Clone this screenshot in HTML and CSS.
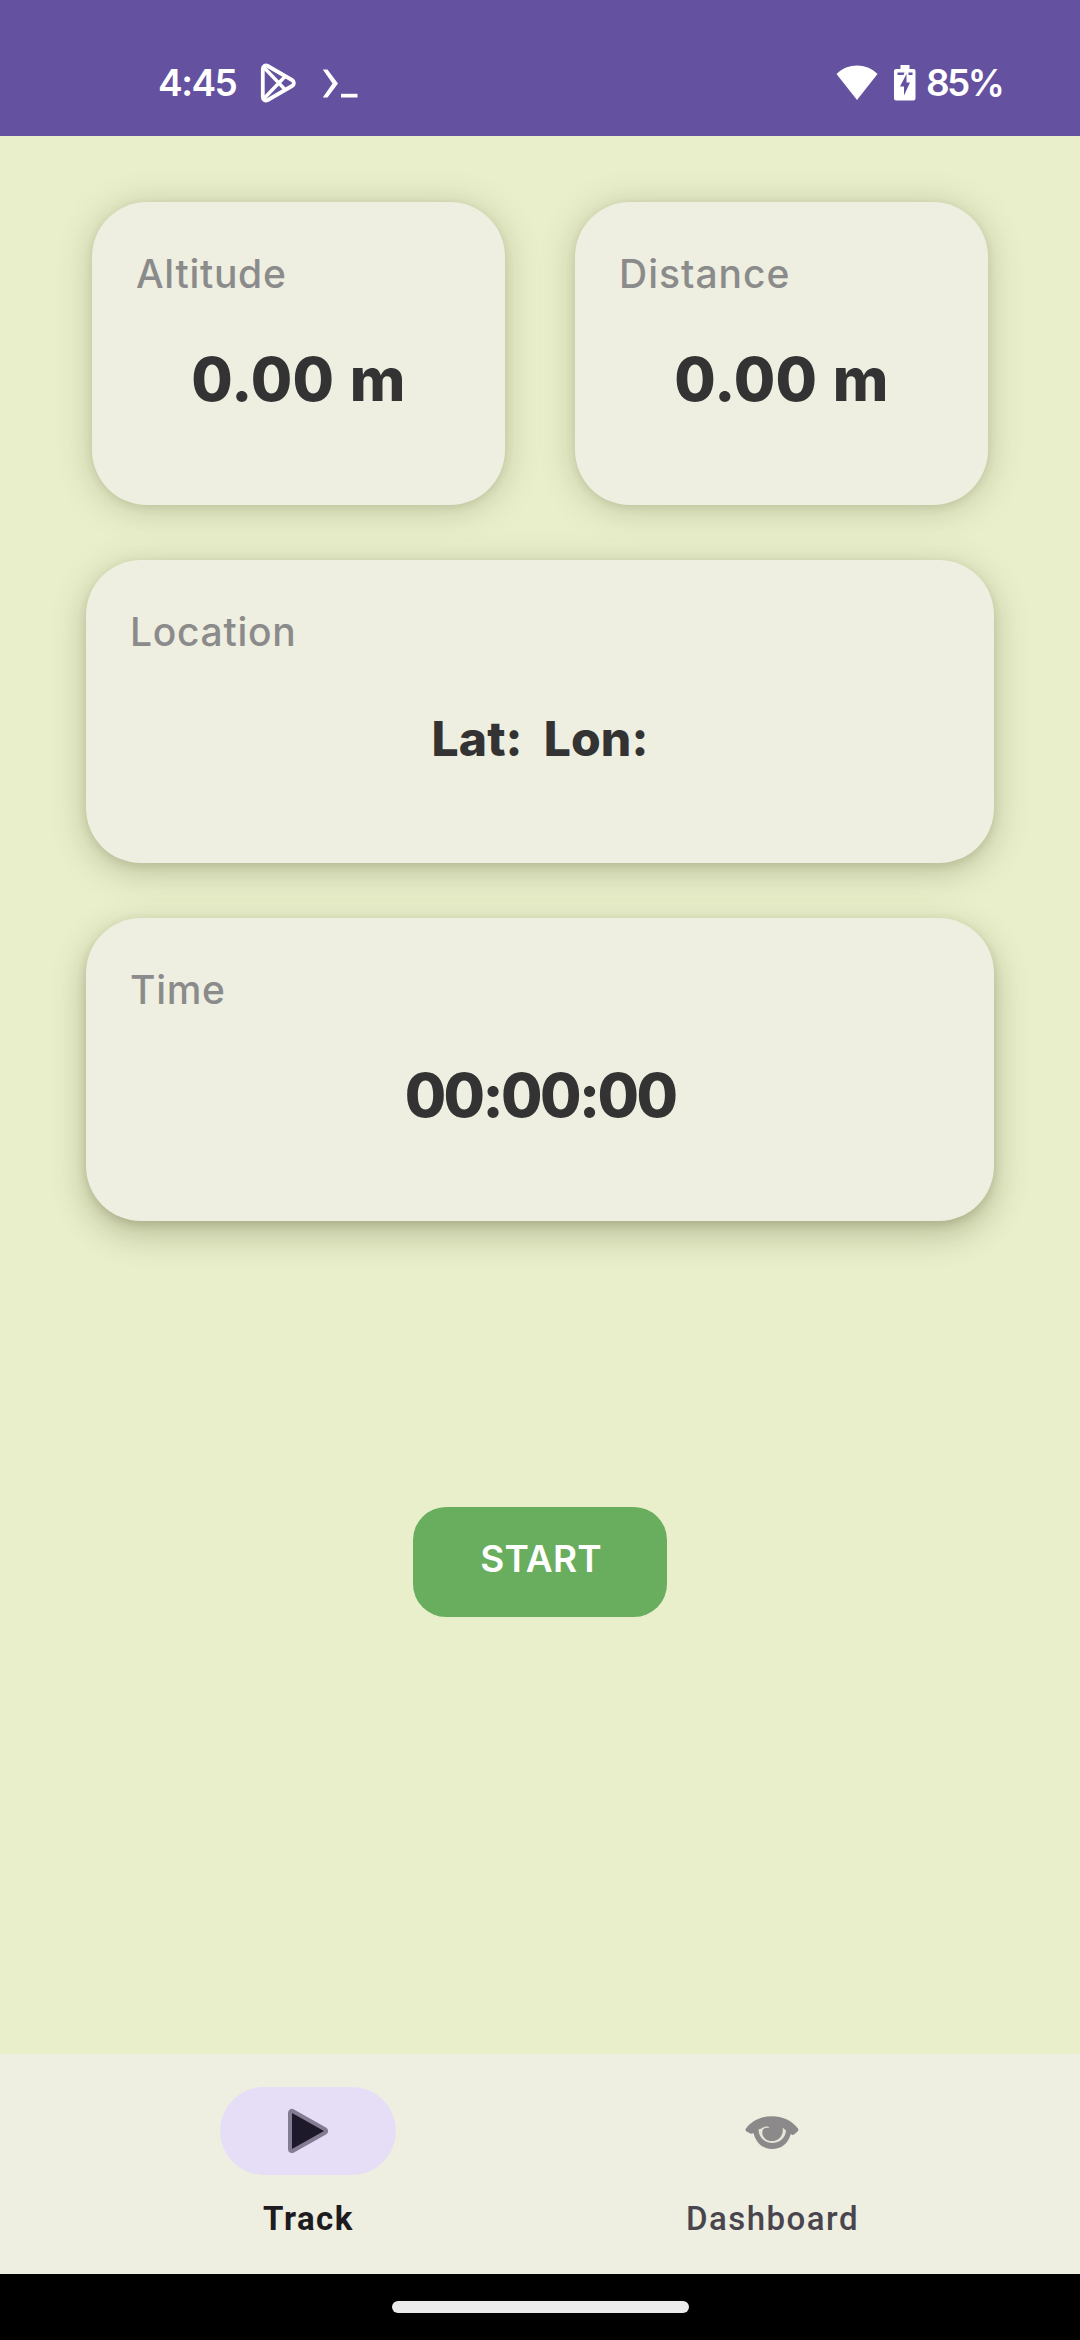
FILE: index.html
```html
<!DOCTYPE html>
<html lang="en">
<head>
<meta charset="utf-8">
<title>Track</title>
<link rel="stylesheet" href="styles.css">
</head>
<body>
<div class="screen">
  <header class="status">
    <div class="status-left">
      <span class="clock">4:45</span>
      <svg class="play-store" width="36" height="40" viewBox="0 0 36 40" fill="none" stroke="#fff" stroke-width="3.8" stroke-linejoin="round">
        <path d="M2.800 6v28c0 3 2.500 4.400 5 3L32 23c2.600-1.500 2.600-4.500 0-6L7.800 3c-2.500-1.400-5 0-5 3z"/>
        <path d="M4 4.500L25.500 27M4 35.500L25.500 13" stroke-width="3.400"/>
      </svg>
      <svg class="prompt" width="36" height="30" viewBox="0 0 36 30">
        <path fill="#fff" d="M.8.500h4.700L16 14.500 5.500 28.500H.8L10.500 14.500z"/>
        <path fill="#fff" d="M19 24.800h16.500v3.700H19z"/>
      </svg>
    </div>
    <div class="status-right">
      <svg class="wifi" width="42" height="36" viewBox="0 0 42 36"><path fill="#fff" d="M0.500 9C12-2.300 30-2.300 41.500 9L21 35z"/></svg>
      <svg class="battery" width="22" height="36" viewBox="0 0 22 36">
        <path fill="#fff" d="M6.500 0h9v4h4Q21.500 4 21.500 6V33.500q0 2-2 2h-17.500Q0 35.500 0 33.500V6Q0 4 2 4H6.500z"/>
        <path fill="#64519f" d="M3.500 7.500h7L9.500 10h-6zM14.500 7.500h4V10h-4zM12.500 9v8.500H16L10 30.500V21.500H6z"/>
      </svg>
      <span class="percent">85%</span>
    </div>
  </header>
  <main class="content">
    <div class="row">
      <section class="card"><h2 class="label">Altitude</h2><p class="value">0.00 m</p></section>
      <section class="card"><h2 class="label spaced">Distance</h2><p class="value">0.00 m</p></section>
    </div>
    <section class="card wide"><h2 class="label">Location</h2><p class="value coords">Lat:&nbsp; Lon:</p></section>
    <section class="card wide low"><h2 class="label">Time</h2><p class="value timer">00:00:00</p></section>
    <button class="start">START</button>
  </main>
  <nav class="tabs">
    <a class="tab active">
      <span class="pill"><svg width="42" height="46" viewBox="0 0 42 46"><path d="M5 5v36L37 23z" fill="#847c93" stroke="#847c93" stroke-width="8" stroke-linejoin="round"/><path d="M5 5v36L37 23z" fill="#1d192b"/></svg></span>
      <span class="tab-text">Track</span>
    </a>
    <a class="tab">
      <span class="pill"><svg class="eye" width="54" height="36" viewBox="0 0 54 36"><path fill="#8c898b" d="M1 13.500C13-3 41-3 53 13.500c.8 1.500.3 2.400-.7 3.300l-3.300 2.700c-1 .8-2 .5-3.200-.5C43 29 36 34 27 34S11 28 8.500 18c-1.500 1-2.500 1-3.500.2L1.500 16.500C.4 15.800.2 14.800 1 13.500z"/><path fill="#e6e6da" d="M13.500 14.500l3-1c1.200-1.400 3.800-2.200 6.500-2l1.500 1.500c-3-.8-5.200-.2-6.500 1.500C15.500 20 20 26 27 26S39 20 37.500 12.500l3.500 3C40.500 22.500 35 28 27 28S13.500 21.500 13.500 14.500z"/></svg></span>
      <span class="tab-text">Dashboard</span>
    </a>
  </nav>
  <footer class="gesture"><div class="handle"></div></footer>
</div>
</body>
</html>
```
FILE: styles.css
```css
* { box-sizing: border-box; }
body { margin: 0; }
h2, p { margin: 0; }
.screen { width: 1080px; height: 2340px; display: flex; flex-direction: column; background: #e8efca; font-family: Inter, sans-serif; }
.status { height: 136px; padding: 60px 78px 0 158px; display: flex; justify-content: space-between; align-items: flex-start; background: #64519f; color: #fff; font-size: 37px; font-weight: 600; line-height: 46px; }
.status-left, .status-right { display: flex; }
.clock { width: 80px; letter-spacing: -1.5px; }
.percent { width: 76px; letter-spacing: -2.6px; }
.play-store { margin: 3px 0 0 22px; }
.prompt { margin: 9px 0 0 26px; }
.wifi { margin-top: 5px; }
.battery { margin: 5px 10px 0 16px; }
.content { flex: 1; display: flex; flex-direction: column; padding: 66px 86px 0; gap: 55px; }
.row { display: flex; gap: 70px; padding: 0 6px; }
.card { flex: 1; height: 303px; padding: 42px 44px; border-radius: 55px; background: #eeefe0; box-shadow: 0 4px 34px rgba(70, 70, 30, .25), 0 2px 8px rgba(70, 70, 30, .1); }
.wide { flex: none; box-shadow: 0 8px 34px rgba(70, 70, 30, .28), 0 3px 8px rgba(70, 70, 30, .12); }
.low { box-shadow: 0 12px 34px rgba(70, 70, 30, .32), 0 3px 8px rgba(70, 70, 30, .16); }
.label { font-size: 39px; font-weight: 500; line-height: 60px; letter-spacing: .7px; color: #8b8b8b; }
.spaced { letter-spacing: 1px; }
.value { margin-top: 30px; font-size: 60px; font-weight: 800; line-height: 90px; letter-spacing: .3px; word-spacing: 2px; text-align: center; color: #333; }
.coords { font-size: 48px; line-height: 93px; letter-spacing: .1px; word-spacing: 0; }
.timer { letter-spacing: -2.6px; }
.start { width: 254px; height: 110px; margin: 231px auto 0; padding: 0 0 7px 2px; border: 0; border-radius: 33px; background: #69ae5e; color: #fff; font: 600 37px/46px Inter, sans-serif; letter-spacing: .2px; }
.tabs { height: 220px; padding: 33px 76px 0; display: flex; background: #eeefe0; font-family: Roboto, sans-serif; }
.tab { flex: 1; display: flex; flex-direction: column; align-items: center; color: #49454f; font-size: 33px; font-weight: 500; letter-spacing: 1.5px; }
.active { color: #1d1b20; font-weight: 700; }
.pill { width: 176px; height: 88px; border-radius: 44px; display: flex; align-items: center; justify-content: center; }
.active .pill { background: #e6def6; }
.eye { margin-top: 3px; }
.tab-text { margin-top: 24px; padding-left: 1px; line-height: 40px; }
.gesture { height: 66px; padding-top: 27px; background: #000; }
.handle { width: 297px; height: 12px; margin: 0 auto; border-radius: 6px; background: #ebebeb; }
```
